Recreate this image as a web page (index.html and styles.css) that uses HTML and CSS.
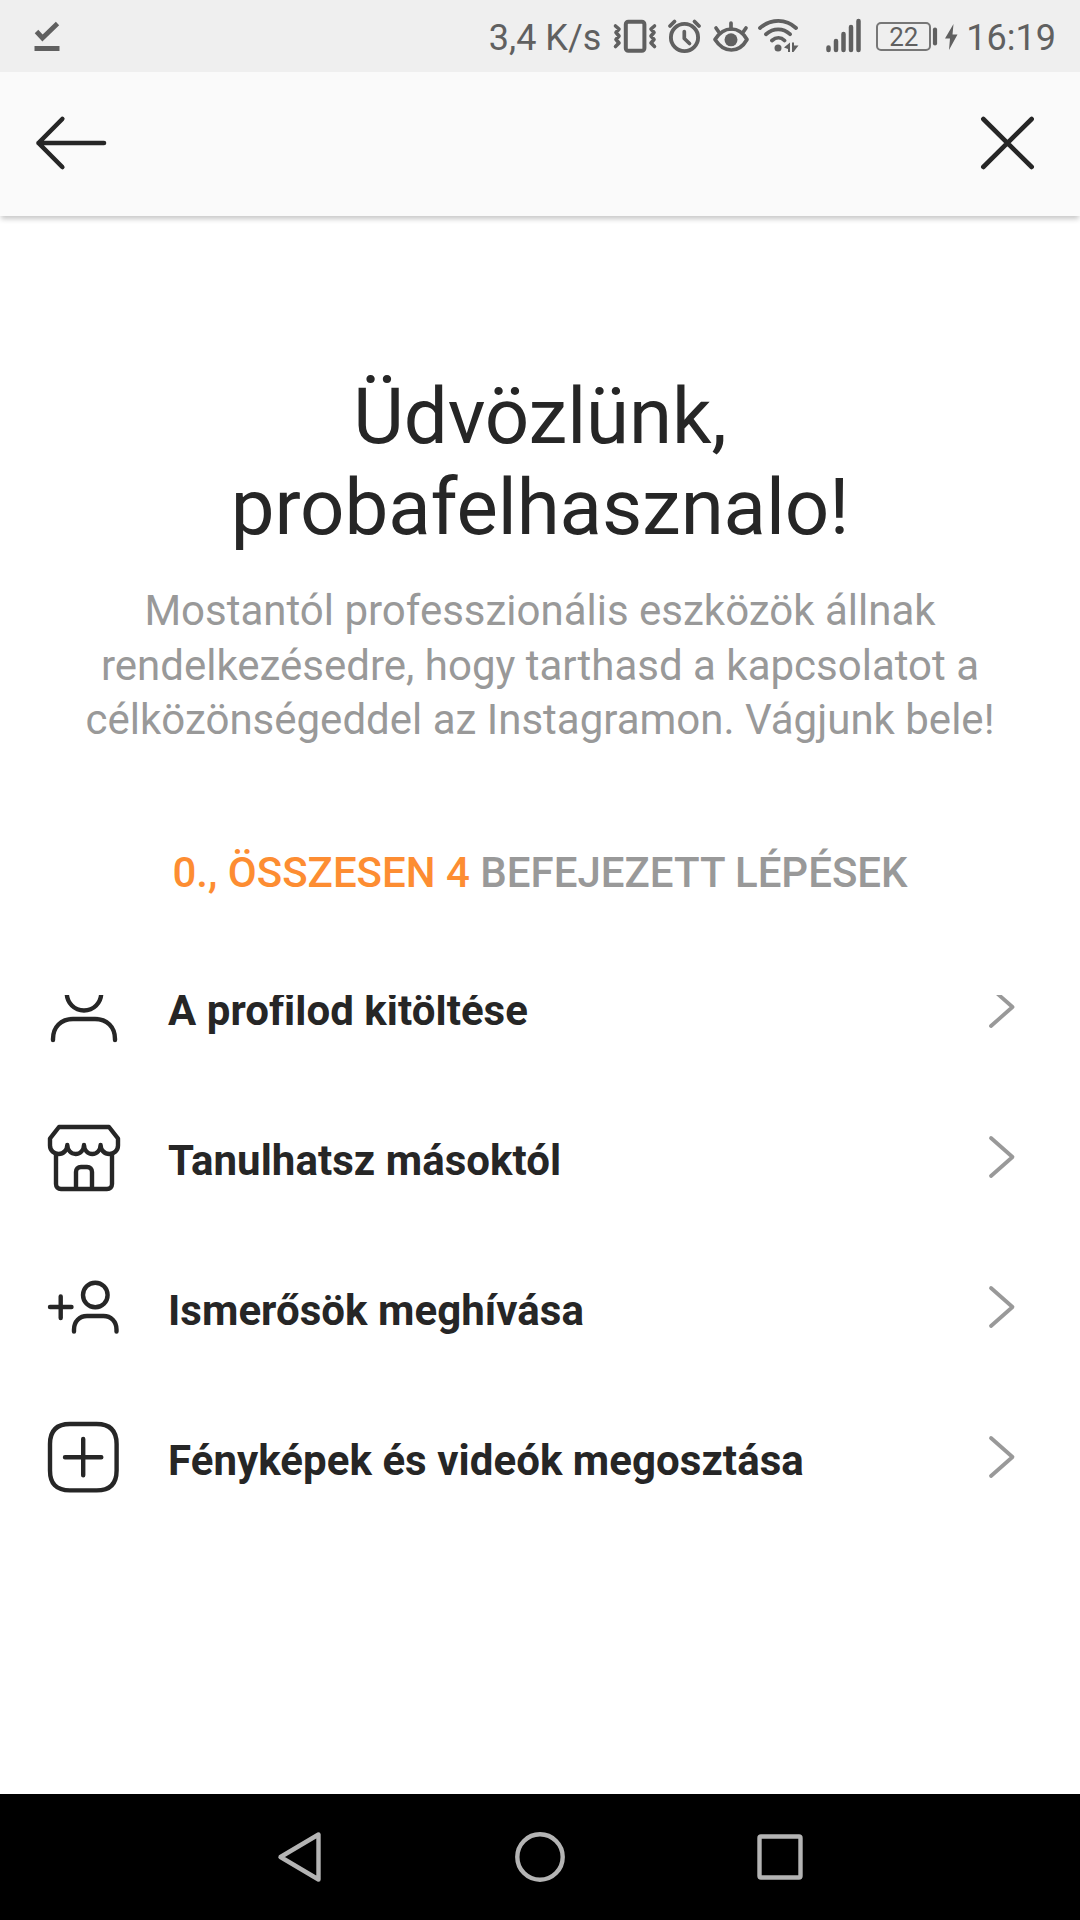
FILE: index.html
```html
<!DOCTYPE html>
<html lang="hu">
<head>
    <meta charset="UTF-8">
    <meta name="viewport" content="width=device-width, initial-scale=1" />
    <title>Üdvözlünk</title>
    <link rel="stylesheet" href="styles.css">
</head>
<body>
    <div class="status-bar">
        <svg class="status-check" width="30" height="72" viewBox="32 0 30 72">
            <path d="M36.5 31.5l6 6.5L57.5 23.5" fill="none" stroke="#606060" stroke-width="4.8" />
            <path d="M34.5 46h25v5h-25z" fill="#606060" />
        </svg>
        <div class="status-right">
            <span class="speed">3,4 K/s</span>
            <!-- vibrate, alarm, eye comfort, wifi, signal -->
            <svg width="48" height="72" viewBox="611 0 48 72">
                <rect x="625.8" y="21.8" width="18.6" height="29" rx="2.5" stroke-width="4" />
                <path d="M615.5 26l3.5 3-3 3.5 3 3.5-3 3.5 3 3.5-3.5 3.5M654.500 26l-3.500 3 3 3.500-3 3.500 3 3.500-3 3.500 3.500 3.500" stroke-width="3.6" />
            </svg>
            <svg width="46" height="72" viewBox="659 0 46 72">
                <circle cx="684.5" cy="37.5" r="13.6" stroke-width="3.9" />
                <path d="M684.3 31.5v7l5.2 5" stroke-width="3.7" />
                <path d="M670 26l4.5-4.5M699 26l-4.5-4.5" stroke-width="3.8" />
            </svg>
            <svg width="48" height="72" viewBox="705 0 48 72">
                <path d="M715 39.5c9-14 24-14 32 0c-8 14-23 14-32 0z" stroke-width="3.7" />
                <circle class="fill" cx="731" cy="39.8" r="6.5" />
                <path d="M731 23v6M716 28l2.8 4M746 28l-2.8 4" stroke-width="3.7" />
            </svg>
            <svg width="62" height="72" viewBox="753 0 62 72">
                <path d="M760 28c11-9.5 26-9.5 36 0M766 34.2c7.5-6.5 17-6.5 24 0M772 40.5c4-3.5 9-3.5 12.5 0" stroke-width="3.8" />
                <circle class="fill" cx="778" cy="48" r="3.5" />
                <path class="fill" d="M784 47.5l6-5v9.5h-2v-3zM792 42.5h2v3h4.5l-5 6.5h-1.5z" />
            </svg>
            <svg width="55" height="72" viewBox="815 0 55 72">
                <path d="M828.5 47.5v2.5M836 41v9M843.5 34v16M851 27v23M858.5 21v29" stroke-width="4.5" />
            </svg>
            <div class="battery">22</div>
            <svg width="30" height="72" viewBox="932 0 30 72">
                <path d="M935 29.5v14" stroke-width="4.2" />
                <path class="fill" d="M953.5 24l-8.5 14.5h5l-1 11.5 8.500-15.500h-5z" />
            </svg>
            <span class="clock">16:19</span>
        </div>
    </div>

    <header>
        <svg width="76" height="60" viewBox="33 113 76 60">
            <path d="M62.3 119L38.5 143l23.800 24M38.500 143H104" />
        </svg>
        <svg width="60" height="60" viewBox="977 113 60 60">
            <path d="M983.3 119l48.4 48M1031.700 119l-48.400 48" />
        </svg>
    </header>

    <main>
        <h1>Üdvözlünk,<br>probafelhasznalo!</h1>
        <p class="intro">Mostantól professzionális eszközök állnak<br>rendelkezésedre, hogy tarthasd a kapcsolatot a<br>célközönségeddel az Instagramon. Vágjunk bele!</p>
        <p class="progress"><span>0., ÖSSZESEN 4</span> BEFEJEZETT LÉPÉSEK</p>

        <!-- the list is scrolled a bit, so the first row is cut at the top -->
        <ul class="steps">
            <li>
                <svg class="icon" width="80" height="80" viewBox="44 967 80 80">
                    <circle cx="84" cy="993.3" r="17.2" />
                    <path d="M53 1040v-1c0-12 8-20 20-20h22c12 0 20 8 20 20v1" />
                </svg>
                <span>A profilod kitöltése</span>
                <svg class="chevron" width="30" height="48" viewBox="987 1133 30 48"><path d="M991 1138l21.500 19-21.500 19" /></svg>
            </li>
            <li>
                <svg class="icon" width="80" height="80" viewBox="44 1117 80 80">
                    <path d="M59 1127h50l9 11.5v7c0 5-4 8.500-8.700 8.500c-4.800 0-8.700-4-8.700-9c0 5-3.600 9-8.300 9s-8.300-4-8.300-9c0 5-3.600 9-8.300 9s-8.400-4-8.400-9c0 5-3.900 9-8.600 9s-8.700-3.500-8.700-8.500v-7z" />
                    <path d="M56 1154v30c0 3 2 5 5 5h46c3 0 5-2 5-5v-30M76 1188v-16c0-3 2-5 5-5h6c3 0 5 2 5 5v16" />
                </svg>
                <span>Tanulhatsz másoktól</span>
                <svg class="chevron" width="30" height="48" viewBox="987 1133 30 48"><path d="M991 1138l21.500 19-21.500 19" /></svg>
            </li>
            <li>
                <svg class="icon" width="80" height="80" viewBox="44 1267 80 80">
                    <path d="M50 1307h21.5M60.700 1296.500v21.500" />
                    <circle cx="95.3" cy="1295" r="12.3" />
                    <path d="M74 1331.5v-2c0-8 5.500-13.500 13-13.500h16.500c7.500 0 13 5.500 13 13.500v2" />
                </svg>
                <span>Ismerősök meghívása</span>
                <svg class="chevron" width="30" height="48" viewBox="987 1133 30 48"><path d="M991 1138l21.500 19-21.500 19" /></svg>
            </li>
            <li>
                <svg class="icon" width="80" height="80" viewBox="44 1417 80 80">
                    <path d="M70 1424h26.600c14 0 20 7 20 20v26.400c0 13-6 20-20 20H70c-14 0-20-7-20-20V1444c0-13 6-20 20-20z" />
                    <path d="M65 1457.2h36.300M83.200 1439v36.300" />
                </svg>
                <span>Fényképek és videók megosztása</span>
                <svg class="chevron" width="30" height="48" viewBox="987 1133 30 48"><path d="M991 1138l21.500 19-21.500 19" /></svg>
            </li>
        </ul>
    </main>

    <nav>
        <svg width="60" height="60" viewBox="270 1827 60 60"><path d="M318.5 1834.5v45L280.500 1857z" /></svg>
        <svg width="60" height="60" viewBox="510 1827 60 60"><circle cx="540" cy="1857" r="22.7" /></svg>
        <svg width="60" height="60" viewBox="750 1827 60 60"><rect x="759.5" y="1836.5" width="41" height="41" rx="1.5" /></svg>
    </nav>
</body>
</html>
```

FILE: styles.css
```css
* {
    box-sizing: border-box;
}

body {
    font-family: Roboto, sans-serif;
    margin: 0;
    height: 1920px;
    display: flex;
    flex-direction: column;
    background-color: #fff;
    color: #262626;
    overflow: hidden;
}

svg {
    display: block;
    flex-shrink: 0;
}

.status-bar {
    height: 72px;
    padding: 0 24px 0 32px;
    display: flex;
    justify-content: space-between;
    background-color: #efefef;
    color: #606060;
    font-size: 36px;
    line-height: 72px;
}

.status-right {
    display: flex;
    align-items: center;
}

.status-right svg {
    fill: none;
    stroke: #606060;
    stroke-linecap: round;
    stroke-linejoin: round;
}

.status-right .fill {
    fill: #606060;
    stroke: none;
}

.speed,
.clock {
    padding-top: 3px;
}

.speed {
    margin-right: 10px;
}

.clock {
    margin-left: 4px;
}

.battery {
    width: 55px;
    height: 29px;
    margin: 1px 1px 0 6px;
    border: 2px solid #777;
    border-radius: 5px;
    font-size: 26px;
    line-height: 26px;
    text-align: center;
}

header {
    height: 144px;
    padding: 0 43px 2px 33px;
    display: flex;
    flex-shrink: 0;
    align-items: center;
    justify-content: space-between;
    background-color: #fafafa;
    box-shadow: 0 4px 5px -1px rgba(0, 0, 0, 0.22);
}

header svg {
    fill: none;
    stroke: #262626;
    stroke-width: 4.6;
    stroke-linecap: round;
    stroke-linejoin: round;
}

main {
    flex: 1;
    padding-top: 155px;
    text-align: center;
}

h1 {
    margin: 0;
    font-size: 78px;
    font-weight: 400;
    line-height: 91px;
    letter-spacing: -0.1px;
}

.intro {
    margin: 31px 0 0;
    color: #999;
    font-size: 42px;
    line-height: 54.5px;
}

.progress {
    margin: 100px 0 0;
    color: #999;
    font-size: 42px;
    font-weight: 500;
    line-height: 50px;
}

.progress span {
    color: #fd8d32;
}

.steps {
    display: flex;
    flex-direction: column;
    justify-content: flex-end;
    height: 537px;
    margin: 97.5px 0 0;
    padding: 0;
    list-style: none;
    overflow: hidden;
}

.steps li {
    display: flex;
    flex-shrink: 0;
    align-items: center;
    height: 150px;
    padding: 0 63px 0 44px;
    font-size: 42px;
    font-weight: 700;
    line-height: 50px;
    letter-spacing: 0.05px;
}

.steps span {
    flex: 1;
    padding: 8px 0 0 44px;
    text-align: left;
}

.icon,
.chevron {
    fill: none;
    stroke: #262626;
    stroke-width: 4.4;
    stroke-linecap: round;
    stroke-linejoin: round;
}

.chevron {
    stroke: #999;
    stroke-width: 3.8;
}

nav {
    height: 126px;
    display: flex;
    flex-shrink: 0;
    align-items: center;
    justify-content: center;
    gap: 180px;
    background-color: #000;
}

nav svg {
    fill: none;
    stroke: #b4b4b4;
    stroke-width: 4.4;
    stroke-linejoin: round;
}
```
